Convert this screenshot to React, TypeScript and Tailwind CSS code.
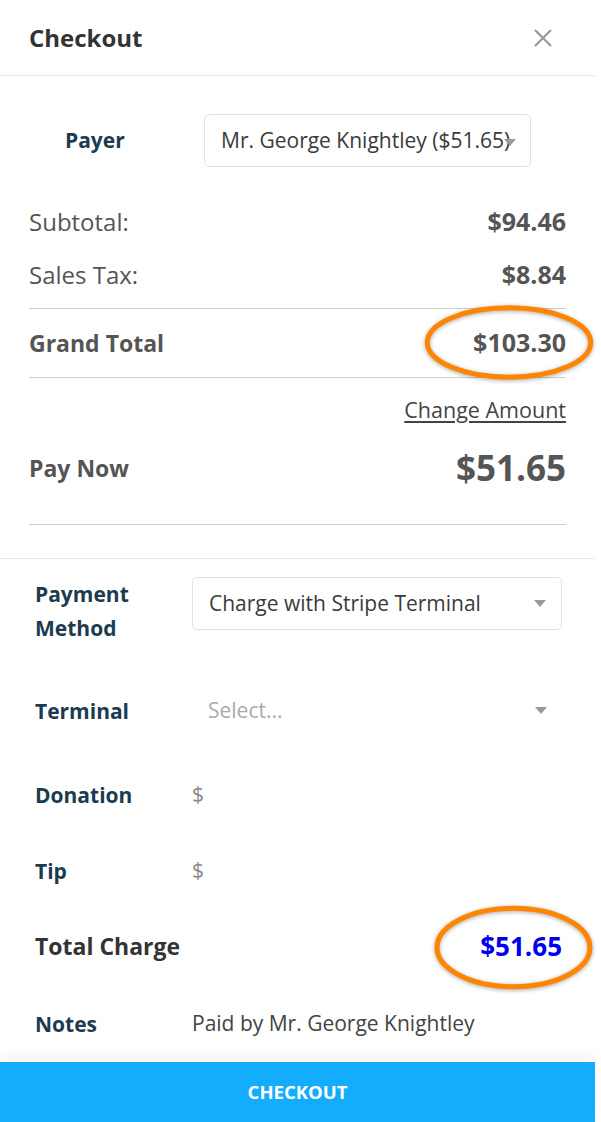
import React from "react";

const font = { fontFamily: "'Open Sans', 'Noto Sans', sans-serif" };

function Caret() {
  return (
    <svg width="12" height="7" viewBox="0 0 12 7" className="shrink-0">
      <path d="M0 0 L12 0 L6 7 Z" fill="#9a9a9a" />
    </svg>
  );
}

function Ring({ className }: { className: string }) {
  return (
    <svg
      className={`absolute pointer-events-none drop-shadow-[0_1px_2px_rgba(0,0,0,0.35)] ${className}`}
      viewBox="0 0 100 50"
      preserveAspectRatio="none"
    >
      <ellipse cx="50" cy="25" rx="47.5" ry="22.5" fill="none" stroke="#ff8400" strokeWidth="5" vectorEffect="non-scaling-stroke" />
    </svg>
  );
}

function Field({ label, children, top = false }: { label: React.ReactNode; children: React.ReactNode; top?: boolean }) {
  return (
    <div className={`flex ${top ? "items-start" : "items-center"} min-h-[53px]`}>
      <div className="w-[157px] shrink-0 font-bold text-[21px] leading-[34px] text-[#1d3b50]">{label}</div>
      <div className="flex-1 flex items-center">{children}</div>
    </div>
  );
}

export default function App() {
  return (
    <div className="w-[595px] min-h-[1122px] bg-white flex flex-col text-[#555]" style={font}>
      <header className="h-[76px] border-b border-[#e6e6e6] flex items-center justify-between pl-[29px] pr-[42px]">
        <h1 className="text-[24px] font-bold text-[#333]">Checkout</h1>
        <svg width="20" height="20" viewBox="0 0 20 20">
          <path d="M2 2 L18 18 M18 2 L2 18" stroke="#999" strokeWidth="2.2" />
        </svg>
      </header>

      <section className="px-[27px]">
        <div className="flex items-center mt-[38px]">
          <div className="w-[177px] pl-[38px] font-bold text-[21px] text-[#1d3b50]">Payer</div>
          <div className="w-[327px] h-[53px] border border-[#e2e2e2] rounded-[5px] flex items-center pl-[16px] relative">
            <span className="text-[21px] text-[#3a3a3a] whitespace-nowrap">Mr. George Knightley ($51.65)</span>
            <span className="absolute right-[14px] top-[24px]"><Caret /></span>
          </div>
        </div>

        <div className="mt-[28px] px-[2px]">
          <div className="h-[53px] flex items-center justify-between text-[24px]">
            <span>Subtotal:</span>
            <span className="font-bold text-[25px]">$94.46</span>
          </div>
          <div className="h-[53px] flex items-center justify-between text-[24px]">
            <span>Sales Tax:</span>
            <span className="font-bold text-[25px]">$8.84</span>
          </div>
        </div>

        <div className="mx-[2px] mt-[7px] border-t border-[#cfcfcf] h-[69px] flex items-center justify-between font-bold relative">
          <span className="text-[23px]">Grand Total</span>
          <span className="text-[25px]">$103.30</span>
          <Ring className="left-[394px] top-[-5px] w-[172px] h-[77px]" />
        </div>

        <div className="mx-[2px] border-t border-[#cfcfcf] pt-[18px] flex justify-end">
          <a className="text-[21.5px] leading-[28px] text-[#444] underline underline-offset-[3px]">Change Amount</a>
        </div>
        <div className="mx-[2px] mt-[12px] h-[64px] flex items-center justify-between">
          <span className="text-[23px] font-bold">Pay Now</span>
          <span className="text-[35px] font-bold">$51.65</span>
        </div>
        <div className="mx-[2px] mt-[24px] border-t border-[#cfcfcf]" />
      </section>

      <div className="mt-[33px] border-t border-[#e8e8e8]" />

      <section className="pl-[35px] pr-[33px] pt-[18px] flex flex-col">
        <Field label={<>Payment<br />Method</>} top>
          <div className="w-full h-[53px] border border-[#e2e2e2] rounded-[5px] flex items-center justify-between pl-[16px] pr-[15px]">
            <span className="text-[21px] text-[#3a3a3a]">Charge with Stripe Terminal</span>
            <Caret />
          </div>
        </Field>

        <div className="mt-[39px]">
          <Field label="Terminal">
            <div className="w-full flex items-center justify-between pl-[16px] pr-[15px]">
              <span className="text-[21px] text-[#aaa]">Select...</span>
              <Caret />
            </div>
          </Field>
        </div>

        <div className="mt-[31px]">
          <Field label="Donation">
            <span className="text-[21px] text-[#888]">$</span>
          </Field>
        </div>

        <div className="mt-[23px]">
          <Field label="Tip">
            <span className="text-[21px] text-[#888]">$</span>
          </Field>
        </div>

        <div className="mt-[23px] h-[53px] flex items-center justify-between relative">
          <span className="text-[23px] font-bold text-[#333]">Total Charge</span>
          <span className="text-[26px] font-bold text-[#0000ee]">$51.65</span>
          <Ring className="left-[398px] top-[-16px] w-[161px] h-[87px]" />
        </div>

        <div className="mt-[24px]">
          <Field label="Notes">
            <span className="text-[21px] text-[#444]">Paid by Mr. George Knightley</span>
          </Field>
        </div>
      </section>

      <div className="flex-1" />
      <button className="h-[60px] w-full bg-[#14adfd] text-white font-bold text-[18.5px] shadow-[0_-8px_12px_rgba(0,0,0,0.04)]">
        CHECKOUT
      </button>
    </div>
  );
}
